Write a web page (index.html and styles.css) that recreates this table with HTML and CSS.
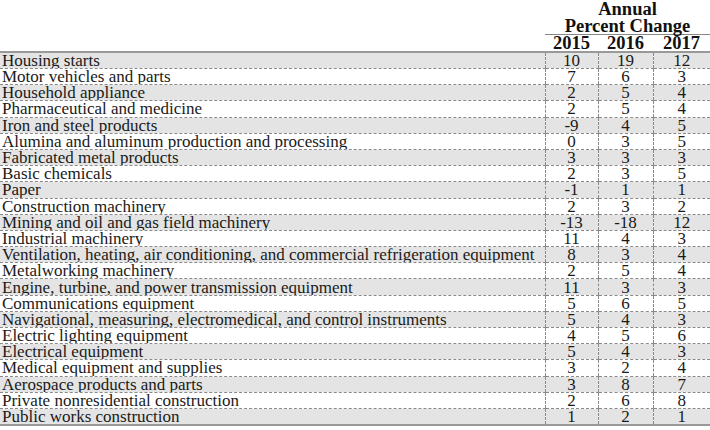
FILE: index.html
```html
<!DOCTYPE html>
<html>
<head>
<meta charset="utf-8">
<link rel="stylesheet" href="styles.css">
</head>
<body>
<table class="tbl">
  <colgroup>
    <col class="c-label"><col class="c-y1"><col class="c-y2"><col class="c-y3">
  </colgroup>
  <thead>
    <tr class="h1"><th></th><th colspan="3">Annual</th></tr>
    <tr class="h2"><th></th><th colspan="3" class="pc">Percent Change</th></tr>
    <tr class="h3"><th></th><th>2015</th><th>2016</th><th>2017</th></tr>
  </thead>
  <tbody>
    <tr><td>Housing starts</td><td>10</td><td>19</td><td>12</td></tr>
    <tr><td>Motor vehicles and parts</td><td>7</td><td>6</td><td>3</td></tr>
    <tr><td>Household appliance</td><td>2</td><td>5</td><td>4</td></tr>
    <tr><td>Pharmaceutical and medicine</td><td>2</td><td>5</td><td>4</td></tr>
    <tr><td>Iron and steel products</td><td>-9</td><td>4</td><td>5</td></tr>
    <tr><td>Alumina and aluminum production and processing</td><td>0</td><td>3</td><td>5</td></tr>
    <tr><td>Fabricated metal products</td><td>3</td><td>3</td><td>3</td></tr>
    <tr><td>Basic chemicals</td><td>2</td><td>3</td><td>5</td></tr>
    <tr><td>Paper</td><td>-1</td><td>1</td><td>1</td></tr>
    <tr><td>Construction machinery</td><td>2</td><td>3</td><td>2</td></tr>
    <tr><td>Mining and oil and gas field machinery</td><td>-13</td><td>-18</td><td>12</td></tr>
    <tr><td>Industrial machinery</td><td>11</td><td>4</td><td>3</td></tr>
    <tr><td>Ventilation, heating, air conditioning, and commercial refrigeration equipment</td><td>8</td><td>3</td><td>4</td></tr>
    <tr><td>Metalworking machinery</td><td>2</td><td>5</td><td>4</td></tr>
    <tr><td>Engine, turbine, and power transmission equipment</td><td>11</td><td>3</td><td>3</td></tr>
    <tr><td>Communications equipment</td><td>5</td><td>6</td><td>5</td></tr>
    <tr><td>Navigational, measuring, electromedical, and control instruments</td><td>5</td><td>4</td><td>3</td></tr>
    <tr><td>Electric lighting equipment</td><td>4</td><td>5</td><td>6</td></tr>
    <tr><td>Electrical equipment</td><td>5</td><td>4</td><td>3</td></tr>
    <tr><td>Medical equipment and supplies</td><td>3</td><td>2</td><td>4</td></tr>
    <tr><td>Aerospace products and parts</td><td>3</td><td>8</td><td>7</td></tr>
    <tr><td>Private nonresidential construction</td><td>2</td><td>6</td><td>8</td></tr>
    <tr><td>Public works construction</td><td>1</td><td>2</td><td>1</td></tr>
  </tbody>
</table>
</body>
</html>
```
FILE: styles.css
```css
html, body {
  margin: 0;
  padding: 0;
  background: #ffffff;
}
body {
  font-family: "Liberation Serif", "DejaVu Serif", serif;
  color: #1a1a1a;
}
.tbl {
  width: 710px;
  border-collapse: collapse;
  table-layout: fixed;
  font-size: 17px;
}
.c-label { width: 545px; }
.c-y1 { width: 53px; }
.c-y2 { width: 55px; }
.c-y3 { width: 57px; }

.tbl th {
  font-weight: bold;
  padding: 0;
  text-align: center;
  line-height: 16px;
  white-space: nowrap;
  font-size: 18.5px;
  color: #111;
}
.h1 th { height: 17px; }
.h2 th { height: 17px; }
.h2 .pc { border-bottom: 1px solid #888; }
.h3 th { height: 15px; vertical-align: bottom; }

.tbl tbody tr { height: 16.2px; }
.tbl tbody tr:first-child td { border-top: 2px solid #999; }
.tbl tbody tr:nth-child(odd) { background: #e4e4e4; }
.tbl td {
  padding: 0;
  line-height: 15px;
  border-bottom: 1px dashed #8a8a8a;
  text-align: center;
  white-space: nowrap;
  overflow: hidden;
}
.tbl td:first-child {
  text-align: left;
  padding-left: 2px;
}
.tbl td + td { border-left: 1px dashed #8a8a8a; }
.tbl tbody tr:last-child td { border-bottom: 2px solid #999; }
```
